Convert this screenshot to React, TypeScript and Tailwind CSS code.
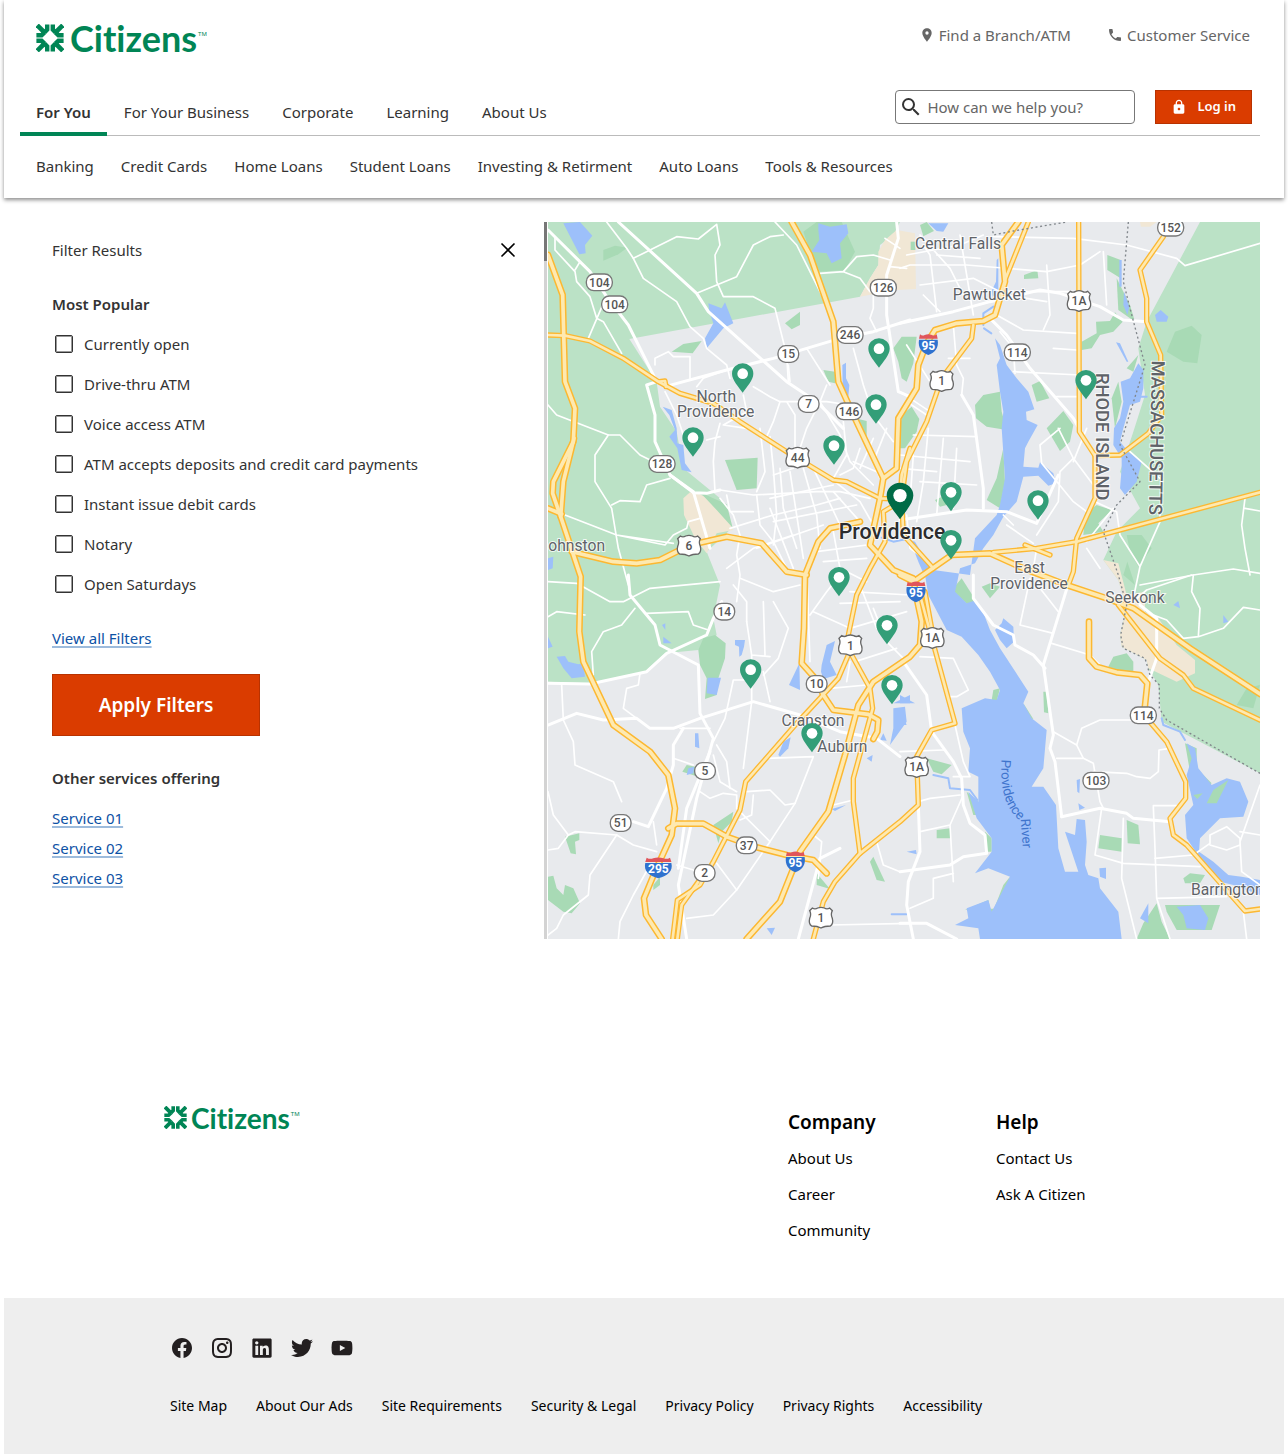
import React from 'react'
import { MdLocationOn, MdPhone, MdSearch, MdLock } from 'react-icons/md'
import { RiFacebookCircleFill, RiInstagramLine } from 'react-icons/ri'
import { FaLinkedin, FaTwitter, FaYoutube } from 'react-icons/fa'

const mainNav = ['For You', 'For Your Business', 'Corporate', 'Learning', 'About Us']

const subNav = [
  'Banking',
  'Credit Cards',
  'Home Loans',
  'Student Loans',
  'Investing & Retirment',
  'Auto Loans',
  'Tools & Resources',
]

const filters = [
  'Currently open',
  'Drive-thru ATM',
  'Voice access ATM',
  'ATM accepts deposits and credit card payments',
  'Instant issue debit cards',
  'Notary',
  'Open Saturdays',
]

const services = ['Service 01', 'Service 02', 'Service 03']

const footerCols = [
  { title: 'Company', links: ['About Us', 'Career', 'Community'] },
  { title: 'Help', links: ['Contact Us', 'Ask A Citizen'] },
]

const legalLinks = [
  'Site Map',
  'About Our Ads',
  'Site Requirements',
  'Security & Legal',
  'Privacy Policy',
  'Privacy Rights',
  'Accessibility',
]

const socials = [
  { name: 'Facebook', icon: <RiFacebookCircleFill className="size-6" /> },
  { name: 'Instagram', icon: <RiInstagramLine className="size-6" /> },
  { name: 'LinkedIn', icon: <FaLinkedin className="size-[22px]" /> },
  { name: 'Twitter', icon: <FaTwitter className="size-[22px]" /> },
  { name: 'YouTube', icon: <FaYoutube className="size-[22px]" /> },
]

// ---- map data, all in map units (3 units = 1px) ----

const greenLand = [
  '24,21 1080,21 1060,60 1020,90 1015,150 990,190 960,245 268,372 350,500 360,575 410,650 430,760 540,850 575,940 500,1010 540,1110 520,1210 530,1260 475,1305 375,1315 315,1370 150,1405 24,1400',
  '1980,21 2160,21 2160,1675 1865,1520 1855,1410 1825,1360 1820,1335 1745,1295 1740,1260 1760,1180 1735,1095 1690,1035 1730,950 1800,880 1740,770 1780,650 1815,540 1795,400 1820,320',
]

const beigeLand = [
  '1070,45 1125,55 1128,222 1060,226 960,245 990,190 1015,150 1015,110 1035,75',
  '430,850 450,832 480,838 540,870 580,945 530,955 500,1015 465,970 432,900',
  '1690,1035 1735,1045 1760,1140 1815,1130 1815,1190 1855,1210 1910,1290 1965,1335 1965,1375 1910,1400 1825,1360 1820,1335 1745,1295 1740,1260 1760,1180 1735,1095',
  '1800,21 1850,21 1830,35 1803,35',
]

const parks = [
  '190,105 225,92 262,98 235,118 190,137',
  '790,50 830,21 905,21 945,110 915,165 840,170 810,110',
  '735,325 780,290 780,330 755,343',
  '395,410 430,387 485,378 458,415',
  '850,465 885,470 885,505 865,500',
  '555,735 653,728 650,820 590,825',
  '480,832 560,868 578,938 530,885',
  '1060,400 1085,365 1130,365 1120,445 1100,500 1085,490 1075,440',
  '955,612 980,618 980,680',
  '1085,600 1115,575 1138,612 1130,650 1095,700 1075,700',
  '1880,410 1905,350 1955,332 1985,360 1972,445 1930,440',
  '1702,120 1742,135 1742,190 1702,165',
  '1730,190 1770,270 1785,320 1735,285',
  '1625,405 1625,380 1670,355 1668,320 1710,318 1725,292 1748,320 1720,350 1680,360 1655,400',
  '1452,180 1492,165 1495,190 1452,192',
  '1475,510 1500,498 1528,550 1490,560',
  '1520,640 1570,588 1600,630 1590,680 1560,708',
  '1305,570 1330,540 1380,530 1385,590 1400,645 1340,635 1308,610',
  '1370,790 1390,700 1395,800 1380,880 1340,855',
  '1185,855 1230,835 1240,865 1200,875',
  '1635,895 1670,870 1715,885 1675,925 1690,950 1630,960',
  '1760,960 1805,960 1835,1000 1795,1055 1770,1010',
  '1715,550 1735,500 1745,560 1725,640',
  '1760,460 1795,420 1780,470',
  '1750,1080 1762,1040 1785,1110',
  '1140,30 1160,21 1182,48 1150,64',
  '1112,80 1126,80 1126,105 1112,105',
  '1705,1355 1720,1325 1760,1315 1780,1340 1780,1372 1730,1370',
  '1360,1425 1380,1420 1370,1460 1355,1455',
  '1450,1465 1480,1512 1465,1510',
  '1510,1430 1520,1430 1525,1495 1512,1492',
  '1160,1630 1235,1650 1205,1678 1180,1670',
  '1190,1845 1230,1840 1232,1870 1190,1870',
  '1680,1860 1745,1870 1745,1910 1675,1900',
  '1760,1815 1795,1830 1800,1888 1763,1885',
  '1935,1585 1970,1600 1970,1660 2015,1705 2000,1715 1950,1670',
  '1930,1990 1950,1975 1995,1980 1980,2005 1935,2005',
  '1875,2070 2040,2070 2015,2145 1910,2145 1880,2090',
  '1790,2172 1810,2125 1850,2065 1865,2120 1890,2172',
  '1325,1115 1350,1105 1380,1115 1350,1150',
  '2090,1470 2120,1420 2160,1410 2140,1480',
  '1235,1125 1265,1090 1310,1160 1290,1175',
  '1335,1850 1355,1870 1355,1910 1340,1910',
  '1280,1730 1315,1760 1315,1800 1300,1800',
  '1275,2085 1345,2055 1355,2100 1390,2010 1410,1985 1380,2080',
  '475,1305 490,1270 525,1260 557,1285 555,1330 535,1390 530,1440 495,1452 500,1390 480,1350',
  '427,1670 440,1650 480,1658 465,1682',
  '75,1865 118,1855 118,1875 105,1880 108,1918 92,1915',
  '24,1985 40,1982 50,2020 70,2040 75,2010 100,2020 120,2065 95,2095 70,2090 24,2055',
  '520,1830 580,1790 575,1820 545,1850 535,1885',
  '340,2010 360,1985 360,2010 340,2025',
  '990,1940 1000,1925 1035,2000 1010,1995',
  '830,1975 870,2022 830,2010',
]

const water = [
  '70,25 120,21 157,62 135,90 137,115 118,118',
  '835,45 835,25 870,35 920,28 925,55 900,85 905,130 875,145 860,115 815,110 838,75',
  '505,265 545,280 555,262 580,325 550,340 500,400 495,370 520,325 508,290',
  '907,450 918,443 918,490 928,510 925,545 908,530',
  '368,575 395,585 410,640 412,685 430,690 435,745 455,772 425,765 412,700 388,665 405,645 388,600',
  '24,1030 40,1025 38,1060 24,1065',
  '1165,25 1225,25 1210,50 1190,48',
  '1370,135 1375,130 1375,230 1358,245 1356,225 1368,200',
  '1738,135 1745,135 1745,215 1738,215',
  '1752,230 1768,275 1762,300 1750,270',
  '1845,300 1862,285 1885,305 1880,320 1850,320',
  '1728,382 1740,385 1765,440 1760,440',
  '1742,500 1770,490 1795,445 1810,465 1810,520 1800,560 1770,570 1750,640 1740,680 1765,710 1805,740 1790,800 1755,840 1740,820 1745,760 1745,730 1720,690 1722,640 1740,610 1750,560',
  // Seekonk river down into the bay
  '1365,370 1380,390 1400,450 1430,490 1465,530 1483,583 1458,590 1460,615 1493,630 1465,680 1455,700 1450,755 1495,758 1500,742 1540,775 1548,805 1525,812 1495,782 1450,785 1430,860 1390,905 1360,960 1330,1000 1305,1045 1260,1060 1252,1100 1245,1130 1280,1165 1300,1158 1325,1180 1350,1245 1380,1300 1465,1430 1450,1465 1475,1510 1520,1545 1510,1660 1475,1715 1510,1715 1548,1770 1555,1900 1575,1970 1615,1970 1575,1850 1605,1860 1610,1812 1635,1815 1640,1880 1635,1950 1645,1980 1675,1990 1680,2020 1735,2090 1745,2172 1320,2172 1315,2140 1245,2130 1285,2110 1280,2080 1345,2055 1355,2090 1410,1985 1345,1960 1305,1975 1355,1910 1355,1870 1310,1810 1285,1730 1315,1760 1315,1685 1285,1670 1290,1600 1270,1550 1265,1480 1335,1450 1370,1455 1380,1425 1350,1370 1315,1320 1265,1265 1220,1245 1165,1140 1155,1080 1180,1065 1290,1080 1305,970 1370,900 1380,870 1395,790 1385,640 1390,590 1380,530 1370,450 1380,430',
  '1110,975 1125,980 1180,1075 1150,1075 1135,1040',
  '1365,1245 1385,1225 1390,1210 1420,1235 1422,1280 1400,1300 1380,1275',
  '1940,1585 1965,1600 1975,1660 2015,1710 2060,1690 2100,1700 2125,1760 2110,1805 2040,1810 2010,1840 1980,1870 1977,1910 2020,1940 2065,1980 2105,1985 2160,1995 2160,2040 2080,2010 2040,2000 1980,1930 1940,1870 1935,1800 1960,1770 1940,1680 1955,1630',
  '1910,2075 1980,2070 2005,2110 1995,2145 1940,2140 1930,2100',
  '1800,2110 1825,2065 1825,2125',
  '1678,1960 1698,1958 1698,1992 1680,1985',
  '1900,1170 1915,1158 1920,1180',
  '2050,1200 2065,1220 2050,1225',
  '1080,1440 1125,1465 1080,1465',
  '1080,1480 1100,1530 1080,1530',
  '1610,1695 1620,1692 1618,1735 1612,1730',
  '1615,1765 1635,1778 1618,1785',
  '1100,1910 1128,1905 1130,1918',
  '50,1325 75,1323 85,1340 115,1348 130,1345 135,1385 95,1390 70,1360',
  '24,1265 38,1295 24,1300',
  '366,1230 376,1225 376,1245',
  '370,1265 395,1285 370,1285',
  '503,1388 543,1388 530,1440 500,1435',
  '585,1275 615,1275 612,1295 605,1320 598,1325 597,1295 585,1290',
  '845,1350 860,1290 885,1278 870,1340 890,1380 850,1392 843,1370',
  '747,1410 778,1345 780,1425',
  '465,1555 475,1555 478,1600 465,1595',
  '715,1620 730,1580 752,1567 745,1600 720,1625',
  '1060,1480 1095,1475 1100,1520 1075,1555 1050,1590 1060,1540',
  '1060,1465 1110,1440 1110,1465',
  '1020,1575 1030,1555 1040,1577',
  '980,1630 998,1620 995,1640',
  '680,2140 705,2138 695,2160',
  '875,1782 918,1770 885,1788',
  '445,1660 462,1655 460,1675 440,1680',
]

// islands in the Barrington inlet
const islets = [
  '2000,1765 2020,1725 2065,1695 2030,1765',
  '1960,1740 1988,1735 1972,1752',
]

const streams = [
  'M1180,1680 L1225,1690 L1230,1720 L1290,1725 L1312,1755',
  'M1055,2098 H1100',
  'M1330,330 L1330,295 L1360,275 M1332,340 L1354,355',
  'M1865,1510 L1870,1530 L1920,1550 L1935,1575',
  'M1800,545 L1820,545',
  'M1025,968 L1060,980 L1110,970',
]

const streets = [
  'M200,21 L260,100 L280,130 L310,190 L410,260 L450,335 L490,370 L500,400 L560,450 L570,490',
  'M280,130 L410,65 L475,72 L530,28 L540,90 L525,120 L530,200 L550,245 L640,245 L705,280 L740,420 L745,500',
  'M470,235 L590,185 L640,90 L690,65 L730,60',
  'M705,21 L770,90 L880,310',
  'M45,65 L45,105 L105,170 L110,200 L150,245 L170,310 L190,320 L245,415 M145,370 L190,265 M120,140 L105,165',
  'M840,175 L910,170 L950,125 L1000,120 L1050,135 M910,170 L960,190 L990,230 M1050,155 L1100,160',
  'M1035,70 L1080,100',
  'M345,450 L345,430 L385,410 L400,425 L450,425 L450,490 M470,515 L490,490 L560,465',
  'M375,530 L410,600 L430,660 L455,700 M500,675 L540,665',
  'M24,570 L50,600 L205,660 L240,660 L300,720 L350,745 M205,660 L165,720 L165,800 L215,880 L235,1000 L265,1110',
  'M215,870 L240,857 L300,860 L320,810 L390,790',
  'M75,900 L230,960 L375,990 L400,960 L440,940 L445,920 L480,910 M230,960 L400,985',
  'M540,825 L640,840 L830,830 L900,830 L990,850 M540,625 L525,680 L520,740 L525,830',
  'M610,540 L620,590 L550,630 L620,640 M690,665 L700,760 L710,900 L700,990 M660,640 L675,770 L650,830',
  'M720,560 L700,620 L680,665 M740,560 L765,600 L765,720 M640,515 L690,545 L720,560 L860,560 L930,570',
  'M800,400 L870,510 M860,510 L840,560 L800,640 L780,700 M745,450 L750,500',
  'M840,560 L900,660 L930,740 L1000,810 M910,620 L920,720 L880,790',
  'M940,400 L970,510 L1000,600 L1060,680 M1000,230 L1000,280 L990,310 L1010,350',
  'M540,850 L580,900 L600,960 L590,1020 L600,1080 L590,1160 M560,840 L570,890 L640,890',
  'M650,840 L660,930 L700,980 L740,1060 M570,940 L700,900 L830,870 L900,850 M690,880 L760,1060',
  'M720,760 L730,880 L770,1000 M750,770 L770,900 L790,1030 M690,850 L880,810 M700,780 L760,760',
  'M880,830 L960,920 M790,760 L830,900 L840,1000 M820,760 L900,930 M700,920 L950,870 M860,780 L960,860 L1000,930',
  'M650,1000 L850,930 M560,1060 L640,1000 L760,960 M850,1040 L980,1030 M830,1010 L980,990 M880,950 L900,1060 L980,1100',
  'M940,740 L1010,770 M960,700 L940,760 L900,780 M1000,670 L960,760 M1040,640 L1000,740 L1020,790',
  'M1100,900 L1110,1000 L1180,1050 M1120,720 L1110,860 M1140,800 L1310,810 M1165,640 L1150,800 L1130,920 M1210,670 L1190,900 M1250,700 L1240,880',
  'M1080,160 L1110,150 L1280,150 L1520,170 L1620,150 L1680,110 M1150,90 L1170,120 L1190,290 M1260,60 L1300,300 M1190,120 L1320,130',
  'M1360,65 L1600,70 L1760,90 L1910,130 L1935,152 L2160,85 M1140,60 L1230,160 L1270,240 M1100,120 L1260,90 L1330,60',
  'M1140,210 L1300,190 L1400,240 L1520,260 M1150,240 L1200,290 M1520,150 L1530,300 L1510,345 M1380,230 L1640,230',
  'M1690,110 L1700,270 M1100,390 L1170,500 M1225,430 L1290,430 M1240,330 L1250,450 L1270,490 L1265,540',
  'M1370,300 L1450,345 L1610,355 M1420,470 L1620,480 M1380,350 L1420,400 L1425,475 M1540,400 L1610,405 M1550,545 L1620,545',
  'M1120,660 L1310,665 M1080,720 L1290,740 M1080,760 L1190,770 M1100,560 L1160,600 M1080,530 L1170,590',
  'M1555,640 L1600,730 L1560,770 L1555,860 L1490,960 M1500,690 L1505,745 L1600,860 L1640,890 M1600,730 L1660,810 M1500,690 L1560,640 M1600,740 L1640,640',
  'M1665,860 L1730,890 L1740,960 L1800,1055 L1860,920 L1860,880 M1800,1055 L1780,1150',
  'M2115,850 L2105,930 L2115,1000 L2130,1080 M2115,880 L2160,888 M1800,1110 L1960,1080 L2080,1062 L2160,1075',
  'M1770,710 L1860,790 M1490,1000 L1480,1060 M1400,930 L1480,985 M1390,900 L1420,930 M1640,1000 L1680,1060 M1720,880 L1640,980',
  'M1535,1285 L1650,1320 L1700,1370 M1440,1230 L1540,1255 M1470,1090 L1440,1230 M1500,1120 L1555,1190',
  'M1540,1550 L1610,1590 L1630,1630 L1660,1645 L1680,1760 L1690,1780',
  'M1610,1590 L1625,1540 L1680,1515 L1790,1515 M1550,1630 L1630,1630',
  'M1660,1670 L1760,1675 L1790,1685 L1830,1690 L1855,1670 L1857,1605 L1890,1600',
  'M1840,1775 L1845,1900 L1850,2050 L1890,2172 M1840,1772 L1920,1772',
  'M1750,1810 L1745,1990 L1790,2172 M1685,1780 L1665,1920 L1750,1945 L1980,1955',
  'M1845,1930 L1960,1920 L2010,1885 L2010,1860 L2060,1835 L2100,1870 L2100,1890 L2060,1905 L2010,1890 M2160,1710 L2100,1880 L2105,1970 L2160,2010 M2100,1850 L2160,1860',
  'M1850,2050 L2060,2045 M2110,2090 L2120,2172',
  'M1780,1160 L1820,1125 L1955,1080 M1960,1080 L1955,1130 L1980,1180 L1975,1265 L1930,1270 L1880,1215 L1840,1200 M1975,1265 L2050,1240 L2110,1177 L2160,1185',
  'M1245,1530 L1270,1640 L1290,1685 L1240,1685',
  'M1110,2080 L1180,2050 L1180,1990 L1240,1975 M1140,1850 L1230,1830 L1240,2000 M1135,1760 L1170,1750 L1260,1740 M1270,1740 L1230,1830',
  'M1140,1325 L1240,1330 L1285,1425 L1250,1445 L1230,1445 M1080,1610 L1210,1605',
  'M24,1100 L110,1105 L210,1160 L250,1160 L330,1120 L540,1100',
  'M24,1205 L50,1190 L135,1200 M285,1180 L245,1230 L190,1250 L155,1310 L160,1380 M320,1195 L445,1190 L460,1230 L505,1245',
  'M300,1375 L295,1410 L260,1420 L250,1480 L290,1510 M65,1410 L70,1515 L100,1580 L105,1650 L220,1700 L245,1760',
  'M24,1730 L40,1800 L85,1860 L105,1850 L230,1860 L280,1890 L350,1910 M85,1860 L55,1900 L24,1905',
  'M230,1860 L150,1980 L145,2040 L70,2100 L50,2140 L24,2160 M330,1950 L280,2040 L240,2120 L235,2172',
  'M635,1460 L610,1660 M635,1320 L635,1460 M620,1395 L580,1395 L555,1510 L520,1580 M620,1220 L635,1320 L690,1325 M670,1160 L675,1320 M670,1370 L690,1460',
  'M700,1160 L745,1240 L715,1330 L670,1380 M580,1110 L620,1160 L620,1220 M680,1630 L820,1625 L765,1765 L690,1880 L590,2025 L520,2100 L440,2110',
  'M590,1780 L690,1880 M620,1730 L690,1725 L735,1770 L765,1765 M640,1740 L635,1800 L600,1815',
  'M530,1590 L560,1640 L570,1720 M520,1620 L540,1700 L590,1730 M480,1730 L510,1750 L550,1735 L590,1740 L590,1780',
  'M400,1630 L460,1650 M420,1540 L510,1540 M410,1950 L460,1965 M530,1945 L590,2025 M340,1820 L350,1890',
  'M820,1190 L930,1240 L1100,1190 M600,1090 L700,1130 L780,1110 M810,1200 L860,1130 L900,1080 M900,1165 L1080,1160 M930,1130 L1110,1140 M800,1060 L810,1340',
  'M870,1420 L980,1410 M945,1340 L1070,1300 M1000,1180 L1040,1280 L1090,1330 M960,1110 L1010,1240 M930,1340 L920,1400',
  'M1010,1880 L1030,1950 L1080,1970 M820,1860 L845,1880 L835,1990 M870,2130 L1110,2125 M880,1770 L940,1755',
]

const mainStreets = [
  'M24,45 L150,170 L200,245 L265,330 L350,500 L320,510 L345,600 L345,680 L390,780 L460,830 L510,1000',
  'M235,21 L470,235 L505,290 L740,500 L830,560 L910,640',
  'M1070,21 L1075,70 L1040,180 L1040,300 L1075,530 L1110,545',
  'M375,515 L560,465 L700,430 L800,400 L900,370 L1000,350 L1110,315',
  'M390,780 L460,833 L500,835 L540,825',
  'M1080,325 L1240,290 L1350,260 L1500,225 L1560,235 L1680,275 L1750,315 L1820,320',
  'M1350,310 L1400,360 L1470,460 L1600,610 L1640,680',
  'M1265,540 L1300,600 L1330,820 L1330,880',
  'M1080,915 L1280,885 L1400,890 L1490,925 L1555,780',
  'M1590,1090 L1550,1220 L1510,1350 L1540,1560 L1530,1600 L1545,1640 L1565,1805',
  'M1300,1080 L1300,1150 L1360,1230 L1420,1260 L1425,1290 L1480,1320 L1515,1360',
  'M1565,1805 L1680,1780 L1760,1795 L1780,1810 L1890,1820',
  'M1800,1170 L1850,1210 L1850,1330 L1825,1400',
  'M1090,1340 L1160,1440 L1175,1550 L1240,1640 L1265,1690 L1270,1770 L1290,1825 L1335,1860 L1340,1915 L1270,1925 L1230,1950 L1080,1970',
  'M1135,1770 L1140,1910 L1105,2000 L1100,2070 L1120,2172 M1080,2125 L1160,2125 L1250,2172',
  'M24,1530 L110,1495 L190,1515 L290,1510 L330,1540 L400,1540 L480,1510 L640,1460 L780,1500 L900,1550 L1010,1570 L1080,1625',
  'M24,1405 L150,1407 L320,1370 L380,1315 L500,1260 L520,1210 L545,1160',
  'M265,1080 L270,1140 L345,1230 L360,1290 L475,1350 L480,1495 L520,1570 L470,1750 L415,2010 L440,2172',
  'M430,1540 L400,1590 L400,1650 L380,1720 L325,1835 L280,1820',
  'M510,1610 L440,1780 L415,1960',
  'M900,1900 L840,1930 L775,2172',
]

const highways = [
  'M24,120 L68,240 L75,500 L105,580 L100,680 L40,800 L38,835 L62,905 L122,1085 L118,1250 L130,1340 L220,1530 L330,1610 L385,1680 L405,1780 L395,1860 L345,1970 L312,2050 L318,2100 L365,2172',
  'M102,670 L70,800 L62,905',
  'M24,880 L65,897',
  'M755,21 L810,120 L880,320 L895,500 L940,600 L1030,790',
  'M95,1010 L220,1040 L290,1045 L360,1035 L450,990 L560,965 L665,985 L740,1070 L800,1080',
  'M960,920 L870,940 L835,980 L795,1080 L792,1240 L785,1345 L830,1395 L850,1440 L880,1485 L985,1498 L1015,1515 L1012,1550 L1000,1572',
  'M1435,21 L1385,90 L1395,200 L1365,300 L1330,318 L1250,325 L1185,345 L1160,385 L1135,450 L1130,520 L1075,610 L1070,760 L1030,790 L1020,850 L990,990 L1060,1065 L1120,1090 L1130,1150 L1145,1220 L1140,1290 L1110,1325 L1000,1400 L955,1470 L915,1620 L865,1790 L780,1910 L720,2060 L620,2172',
  'M1080,1080 L1120,1100 L1235,1020 L1350,1015 L1450,1060 L1580,1110 L1700,1150 L1780,1180 L1950,1300 L2160,1437',
  'M385,1840 L410,1826 L490,1826 L560,1865 L650,1897 L740,1920 L820,1935 L860,1975',
  'M1647,1220 L1647,1330 L1670,1355 L1730,1372 L1800,1380 L1822,1405 L1812,1500',
]

const routes = [
  'M24,360 L75,362 L150,378 L250,430 L355,500 L420,535 L520,565 L600,620 L740,710 L880,795 L920,800 L1020,850 L1065,852',
  'M358,500 L375,498 L378,515',
  'M1465,21 L1395,195',
  'M1300,330 L1295,370 L1205,490 L1160,620 L1100,740 L1085,850 L1090,960 L1180,1060',
  'M1110,700 L1085,780 L1080,860 L1030,890 L1035,980 L990,1060 L950,1140 L925,1260 L935,1320 L990,1420 L998,1480 L940,1690 L940,1760 L960,1915',
  'M925,1320 L895,1390 L770,1525 L617,1700 L600,1785 L520,1940 L480,2010 L412,2055 L398,2172',
  'M1360,1012 L1490,1000 L1610,980 L1870,910 L2160,832',
  'M1455,990 L1530,1020',
  'M1735,1170 L1860,1330 L1930,1380 L1960,1420 L2160,1515',
  'M1616,21 L1618,650 L1665,722 L1665,850 L1610,970 L1600,1070 L1585,1110',
  'M1870,65 L1800,165 L1820,250 L1820,320 L1862,420 L1865,600 L1825,655 L1740,720 L1665,722',
  'M1812,1500 L1880,1580 L1937,1700 L1937,1750 L1890,1810 L1900,1860 L1940,1890 L2115,2088 L2160,2082',
  'M1140,1140 L1245,1525 L1175,1545 L1130,1625 L1135,1770 L1080,1820 L960,1915 L885,2000 L850,2060 L820,2172',
  'M1155,1130 L1175,1240',
  'M475,2000 L425,2070 L412,2172',
]

const borders = [
  'M1355,21 L1360,60 L1420,48 L1580,21',
  'M1765,21 L1750,200 L1770,280 L1815,450 L1740,690 L1800,800 L1730,870 L1690,950 L1735,1080 L1760,1170 L1742,1260 L1750,1300 L1815,1330 L1830,1380 L1858,1410 L1858,1480 L1880,1515 L1950,1555 L2160,1675',
]

const stateRoutes = [
  { n: '104', x: 178, y: 202 },
  { n: '104', x: 224, y: 268 },
  { n: '126', x: 1030, y: 218 },
  { n: '246', x: 930, y: 360 },
  { n: '15', x: 745, y: 417 },
  { n: '7', x: 806, y: 567 },
  { n: '146', x: 927, y: 589 },
  { n: '128', x: 366, y: 747 },
  { n: '14', x: 553, y: 1190 },
  { n: '10', x: 830, y: 1407 },
  { n: '5', x: 495, y: 1668 },
  { n: '51', x: 242, y: 1824 },
  { n: '37', x: 620, y: 1891 },
  { n: '2', x: 494, y: 1974 },
  { n: '114', x: 1432, y: 412 },
  { n: '152', x: 1892, y: 38 },
  { n: '114', x: 1810, y: 1501 },
  { n: '103', x: 1668, y: 1697 },
]

const usRoutes = [
  { n: '44', x: 773, y: 728 },
  { n: '6', x: 447, y: 992 },
  { n: '1', x: 931, y: 1291 },
  { n: '1', x: 843, y: 2108 },
  { n: '1A', x: 1617, y: 258 },
  { n: '1', x: 1205, y: 498 },
  { n: '1A', x: 1177, y: 1269 },
  { n: '1A', x: 1130, y: 1656 },
]

const interstates = [
  { n: '95', x: 1165, y: 388 },
  { n: '95', x: 1128, y: 1130 },
  { n: '95', x: 766, y: 1940 },
  { n: '295', x: 355, y: 1958 },
]

const towns = [
  { name: 'Central Falls', x: 1254, y: 102 },
  { name: 'Pawtucket', x: 1348, y: 256 },
  { name: 'North', x: 529, y: 560 },
  { name: 'Providence', x: 527, y: 606 },
  { name: 'ohnston', x: 110, y: 1008 },
  { name: 'East', x: 1469, y: 1074 },
  { name: 'Providence', x: 1467, y: 1121 },
  { name: 'Seekonk', x: 1785, y: 1165 },
  { name: 'Cranston', x: 819, y: 1534 },
  { name: 'Auburn', x: 907, y: 1612 },
  { name: 'Barrington', x: 2062, y: 2040 },
]

// tip of each pin
const pins = [
  { x: 1017, y: 458 },
  { x: 608, y: 533 },
  { x: 1008, y: 626 },
  { x: 459, y: 725 },
  { x: 882, y: 749 },
  { x: 1638, y: 553 },
  { x: 1233, y: 889 },
  { x: 1494, y: 914 },
  { x: 1233, y: 1033 },
  { x: 897, y: 1144 },
  { x: 1041, y: 1288 },
  { x: 632, y: 1421 },
  { x: 1056, y: 1468 },
  { x: 816, y: 1612 },
]

const pinPath = 'M0,0 C-12,-18 -32,-38 -32,-57 A32,31 0 0 1 32,-57 C32,-38 12,-18 0,0 Z'

const Logo = ({ small }: { small?: boolean }) => (
  <a href="#" aria-label="Citizens home" className="flex items-center text-[#008555]">
    <svg viewBox="0 0 28 28" className={small ? 'size-[23px]' : 'size-7'} fill="none" stroke="currentColor">
      {[0, 90, 180, 270].map((deg) => (
        <g key={deg} transform={`rotate(${deg} 14 14)`}>
          <path d="M1.2,1.2 L9,9" strokeWidth="4.6" />
          <path d="M11.2,0.4 V5.6 L8.4,8.6" strokeWidth="4.4" />
          <path d="M16.8,0.4 V5.6 L19.6,8.6" strokeWidth="4.4" />
        </g>
      ))}
    </svg>
    <span
      className={
        small
          ? 'ml-1 font-[Lato,sans-serif] text-[28px] leading-[22px] font-bold [font-variant-ligatures:none]'
          : 'ml-1.5 font-[Lato,sans-serif] text-[36px] leading-7 font-bold [font-variant-ligatures:none]'
      }
    >
      Citizens
    </span>
    <span className="mb-2 ml-px text-[6px] leading-none">TM</span>
  </a>
)

const BranchMap = () => (
  <svg
    viewBox="24 21 2136 2151"
    preserveAspectRatio="xMidYMid slice"
    role="img"
    aria-label="Map of branches near Providence"
    className="h-[717px] min-w-0 flex-1 bg-[#e8eaed] font-[Roboto,sans-serif]"
  >
    {greenLand.map((p) => <polygon key={p} points={p} fill="#bbe2c6" />)}
    {beigeLand.map((p) => <polygon key={p} points={p} fill="#f1e7d5" />)}
    {parks.map((p) => <polygon key={p} points={p} fill="#a8dab5" />)}
    {water.map((p) => <polygon key={p} points={p} fill="#9dc0fa" />)}
    {islets.map((p) => <polygon key={p} points={p} fill="#a8dab5" />)}

    <g fill="none" strokeLinejoin="round" strokeLinecap="round">
      {streams.map((d) => <path key={d} d={d} stroke="#9dc0fa" strokeWidth="6" />)}
      {streets.map((d) => <path key={d} d={d} stroke="#fff" strokeWidth="5" />)}
      {mainStreets.map((d) => <path key={d} d={d} stroke="#fff" strokeWidth="9" />)}
      {routes.map((d) => <path key={d} d={d} stroke="#fcb831" strokeWidth="16" />)}
      {highways.map((d) => <path key={d} d={d} stroke="#fcb831" strokeWidth="20" />)}
      {routes.map((d) => <path key={d} d={d} stroke="#fee9b0" strokeWidth="8" />)}
      {highways.map((d) => <path key={d} d={d} stroke="#fee9b0" strokeWidth="11" />)}
      {borders.map((d) => (
        <path key={d} d={d} stroke="#80868b" strokeWidth="4" strokeDasharray="6 8" strokeLinecap="butt" />
      ))}
    </g>

    <g textAnchor="middle" fontSize="36" fontWeight="500" fill="#555">
      {stateRoutes.map(({ n, x, y }) => {
        const w = n.length === 3 ? 78 : 62
        return (
          <g key={n + x}>
            <rect x={x - w / 2} y={y - 25} width={w} height="50" rx="23" fill="#fff" stroke="#777" strokeWidth="4" />
            <text x={x} y={y + 13}>{n}</text>
          </g>
        )
      })}
      {usRoutes.map(({ n, x, y }) => (
        <g key={n + x}>
          <path
            transform={`translate(${x} ${y})`}
            d="M-26,-29 Q-18,-24 -10,-29 Q0,-33 10,-29 Q18,-24 26,-29 L34,-21 Q28,-10 34,2 Q38,18 28,25 Q10,25 0,31 Q-10,25 -28,25 Q-38,18 -34,2 Q-28,-10 -34,-21 Z"
            fill="#fff"
            stroke="#666"
            strokeWidth="4"
          />
          <text x={x} y={y + 13}>{n}</text>
        </g>
      ))}
      {interstates.map(({ n, x, y }) => (
        <g key={n + x} fill="#fff" fontWeight="700">
          <g transform={`translate(${x} ${y}) scale(${n.length === 3 ? 1.4 : 1} 1)`}>
            <path d="M-28,-14 H28 C32,10 20,24 0,32 C-20,24 -32,10 -28,-14 Z" fill="#2f72cf" />
            <path d="M-28,-17 L-25,-30 Q-18,-24 -11,-28 Q0,-33 11,-28 Q18,-24 25,-30 L28,-17 Z" fill="#e0555b" />
          </g>
          <text x={x} y={y + 16}>{n}</text>
        </g>
      ))}
    </g>

    <g textAnchor="middle" fill="#5f6368" stroke="#fff" strokeWidth="6" strokeOpacity="0.8" paintOrder="stroke">
      {towns.map(({ name, x, y }) => (
        <text key={name + x} x={x} y={y} fontSize="47">{name}</text>
      ))}
      <text x="1056" y="971" fontSize="64" fontWeight="500" fill="#2b2c2e">Providence</text>
      <g fontSize="55" fontWeight="500">
        <text transform="translate(1669 665) rotate(90)">RHODE ISLAND</text>
        <text transform="translate(1831 668) rotate(91)">MASSACHUSETTS</text>
      </g>
    </g>

    <g fontSize="40" fill="#3f74cd">
      <path id="river" d="M1385,1633 C1378,1720 1396,1780 1440,1818" fill="none" />
      <text>
        <textPath href="#river">Providence</textPath>
      </text>
      <text transform="translate(1442 1812) rotate(86)">River</text>
    </g>

    {pins.map(({ x, y }) => (
      <g key={`${x}-${y}`} transform={`translate(${x} ${y})`}>
        <path d={pinPath} fill="#339e78" />
        <circle cy="-57" r="16" fill="#fff" />
      </g>
    ))}
    <g transform="translate(1080 913) scale(1.25)">
      <path d={pinPath} fill="#006b46" />
      <circle cy="-57" r="16" fill="#fff" />
    </g>
  </svg>
)

const Header = () => (
  <header className="bg-white pt-6 pb-5 pl-4 pr-6 shadow-[0_2px_4px_rgba(0,0,0,0.45)]">
    <div className="flex items-start justify-between pl-4 pr-2.5">
      <Logo />
      <div className="flex gap-9 text-[15px] leading-[22px] text-[#666]">
        <a href="#" className="flex items-center gap-1">
          <MdLocationOn className="size-4" />
          Find a Branch/ATM
        </a>
        <a href="#" className="flex items-center gap-1">
          <MdPhone className="size-4" />
          Customer Service
        </a>
      </div>
    </div>

    <div className="mt-[38px] flex items-start justify-between border-b border-[#bbb] pr-2">
      <nav className="-mb-px flex gap-px pt-2.5">
        {mainNav.map((item, i) => (
          <a
            key={item}
            href="#"
            className={
              i === 0
                ? 'border-b-4 border-[#008555] px-4 pb-2 text-[15px] leading-6 font-semibold'
                : 'border-b-4 border-transparent px-4 pb-2 text-[15px] leading-6'
            }
          >
            {item}
          </a>
        ))}
      </nav>
      <div className="flex gap-5">
        <label className="flex h-[34px] w-60 items-center gap-1 rounded border border-[#777] px-[3px]">
          <MdSearch className="size-6 shrink-0" />
          <input
            type="text"
            aria-label="Search"
            placeholder="How can we help you?"
            className="min-w-0 flex-1 text-[15px] outline-none placeholder:text-[#666]"
          />
        </label>
        <button className="flex h-[34px] items-center gap-2.5 border border-[#b83200] bg-[#da3c00] px-[15px] text-[13px] font-semibold text-white">
          <MdLock className="size-4" />
          Log in
        </button>
      </div>
    </div>

    <nav className="mt-[18px] flex gap-[27px] px-4 text-[15px] leading-6">
      {subNav.map((item) => (
        <a key={item} href="#">{item}</a>
      ))}
    </nav>
  </header>
)

const FilterPanel = () => (
  <section className="w-[524px] shrink-0 px-8 pt-4 text-[15px] leading-6">
    <div className="flex items-center justify-between">
      <h1>Filter Results</h1>
      <button aria-label="Close" className="-mr-2 text-black">
        <svg viewBox="0 0 24 24" className="size-6" fill="none" stroke="currentColor" strokeWidth="1.6">
          <path d="M5.5,5.5 L18.5,18.5 M18.5,5.5 L5.5,18.5" />
        </svg>
      </button>
    </div>

    <h2 className="mt-[30px] font-semibold">Most Popular</h2>
    <ul className="mt-4 flex flex-col gap-4">
      {filters.map((f) => (
        <li key={f}>
          <label className="flex items-center gap-[11px] pl-[3px]">
            <input
              type="checkbox"
              className="size-[18px] appearance-none rounded-xs border border-[#333] shadow-[inset_0_0_0_1px_#999] checked:bg-[#008555]"
            />
            {f}
          </label>
        </li>
      ))}
    </ul>

    <a href="#" className="mt-[30px] block w-fit text-[#0d52a5] underline decoration-[#9dbbdc] decoration-2 underline-offset-2">
      View all Filters
    </a>
    <button className="mt-6 block h-[62px] w-52 border border-[#b83200] bg-[#da3c00] text-[19px] font-semibold text-white">
      Apply Filters
    </button>

    <h2 className="mt-[30px] font-semibold">Other services offering</h2>
    <ul className="mt-4 flex flex-col gap-1.5">
      {services.map((s) => (
        <li key={s}>
          <a href="#" className="text-[#0d52a5] underline decoration-[#9dbbdc] decoration-2 underline-offset-2">
            {s}
          </a>
        </li>
      ))}
    </ul>
  </section>
)

const Footer = () => (
  <footer className="text-black">
    <div className="mt-[167px] flex min-h-48 items-start pr-20 pl-40">
      <Logo small />
      <div className="ml-auto flex">
        {footerCols.map((col) => (
          <div key={col.title} className="w-52">
            <h3 className="mt-1 text-[19px] leading-6 font-semibold">{col.title}</h3>
            <ul className="mt-3 flex flex-col gap-3 text-[15px] leading-6">
              {col.links.map((l) => (
                <li key={l}>
                  <a href="#">{l}</a>
                </li>
              ))}
            </ul>
          </div>
        ))}
      </div>
    </div>

    <div className="bg-[#eee] px-[166px] pt-[38px] pb-9">
      <div className="flex gap-4 text-[#231f20]">
        {socials.map((s) => (
          <a key={s.name} href="#" aria-label={s.name} className="flex size-6 items-center justify-center">
            {s.icon}
          </a>
        ))}
      </div>
      <div className="mt-[34px] flex flex-wrap gap-[29px] pb-0.5 text-[14px] leading-6">
        {legalLinks.map((l) => (
          <a key={l} href="#">{l}</a>
        ))}
      </div>
    </div>
  </footer>
)

const App = () => {
  return (
    <div className="bg-white px-1 font-['Noto_Sans',sans-serif] text-[#333]">
      <Header />
      <main className="mt-6 flex pr-6 pl-4">
        <FilterPanel />
        <div className="mr-px h-[717px] w-[3px] bg-[#d3d3d3]">
          <div className="h-[39px] bg-[#777]" />
        </div>
        <BranchMap />
      </main>
      <Footer />
    </div>
  )
}

export default App
